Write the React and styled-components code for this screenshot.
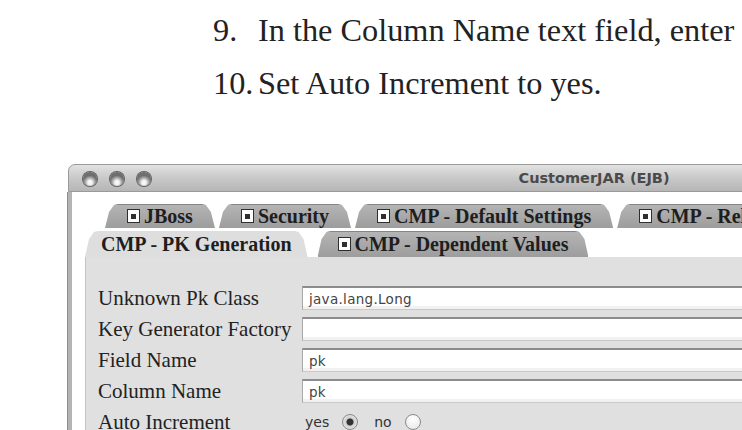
import React from "react";
import styled, { createGlobalStyle } from "styled-components";

const GlobalStyle = createGlobalStyle`
	html, body {
		margin: 0;
		padding: 0;
		background: #fff;
		overflow: hidden;
	}
`;

const Page = styled("div")`
	width: 742px;
	height: 430px;
	overflow: hidden;
	background: #fff;
	display: flex;
	flex-direction: column;
	align-items: flex-start;
`;

const Steps = styled("ol")`
	list-style: none;
	margin: 0;
	padding: 4px 0 0 213px;
	font-family: "Liberation Serif", serif;
	font-size: 32.3px;
	color: #222;
`;

const Step = styled("li")`
	display: flex;
	align-items: center;
	height: 53px;
	white-space: nowrap;
`;

const StepNum = styled("span")`
	width: 45px;
	flex: none;
`;

const Window = styled("div")`
	flex: none;
	width: 1052px;
	margin: 54px 0 0 68px;
	display: flex;
	flex-direction: column;
`;

const TitleBar = styled("div")`
	height: 26px;
	display: grid;
	grid-template-columns: 1fr auto 1fr;
	align-items: center;
	padding: 0 14px;
	border: 1px solid #9a9a9a;
	border-radius: 7px 7px 0 0;
	background: linear-gradient(#e2e2e2, #c6c6c6 55%, #b6b6b6);
`;

const Lights = styled("div")`
	display: flex;
	gap: 13px;
	margin-top: 2px;
`;

const Light = styled("span")`
	width: 14px;
	height: 14px;
	border-radius: 50%;
	background: radial-gradient(
		circle at 50% 75%,
		#f6f6f6 0 2px,
		#bcbcbc 4px,
		#6e6e6e 7px
	);
	box-shadow: 0 0 0 1px #606060;
`;

const Title = styled("span")`
	font-family: "DejaVu Sans", sans-serif;
	font-size: 14.5px;
	font-weight: bold;
	color: #4a4a4a;
`;

const Body = styled("div")`
	background: #fff;
	border-left: 4px solid #b4b4b4;
	box-shadow: -1px 0 0 #8d8d8d;
	padding-top: 12px;
	display: flex;
	flex-direction: column;
`;

const TabRow = styled("div")`
	display: flex;
	gap: ${(props) => props.$gap}px;
	padding-left: ${(props) => props.$indent}px;
	margin-bottom: ${(props) => props.$below}px;
`;

const Tab = styled("div")`
	height: ${(props) => props.$h}px;
	display: flex;
	align-items: center;
	gap: 4px;
	padding: 0 ${(props) => (props.$active ? 16 : props.$pad)}px;
	background: ${(props) =>
		props.$active
			? "#dedede"
			: "linear-gradient(#858585 0 1px, #b4b4b4 1px, #9d9d9d)"};
	clip-path: polygon(
		4px 8px,
		9px 1px,
		13px 0,
		calc(100% - 13px) 0,
		calc(100% - 9px) 1px,
		calc(100% - 4px) 8px,
		100% 100%,
		0 100%
	);
	font-family: "Liberation Serif", serif;
	font-size: 20px;
	font-weight: bold;
	color: #1e1e1e;
	white-space: nowrap;
`;

const TabIcon = styled("span")`
	width: 11px;
	height: 12px;
	flex: none;
	border: 1px solid #2e2e2e;
	background: #fff;
	display: flex;
	align-items: center;
	justify-content: center;

	&::after {
		content: "";
		width: 5px;
		height: 5px;
		background: #2e2e2e;
	}
`;

const Panel = styled("div")`
	margin-left: 13px;
	height: 200px;
	background: #e0e0e0;
	border-left: 1px solid #c4c4c4;
	padding: 29px 0 0 12px;
`;

const Form = styled("div")`
	display: grid;
	grid-template-columns: 204px 1fr;
	grid-auto-rows: 24px;
	row-gap: 7px;
	align-items: center;
`;

const Label = styled("span")`
	font-family: "Liberation Serif", serif;
	font-size: 21px;
	color: #222;
	white-space: nowrap;
`;

const Field = styled("div")`
	height: 24px;
	box-sizing: border-box;
	background: #fff;
	border-top: 2px solid #8c8c8c;
	border-left: 1px solid #a8a8a8;
	border-bottom: 1px solid #c9c9c9;
	box-shadow: inset 0 -3px 0 #f1f1f1;
	padding-left: 6px;
	display: flex;
	align-items: center;
	font-family: "DejaVu Sans", sans-serif;
	font-size: 13.5px;
	letter-spacing: 0.3px;
	color: #444;
`;

const Choices = styled("div")`
	display: flex;
	align-items: center;
	gap: 16px;
	padding-left: 3px;
	font-family: "DejaVu Sans", sans-serif;
	font-size: 14px;
	color: #333;
`;

const Choice = styled("label")`
	display: flex;
	align-items: center;
	gap: 13px;
`;

const Radio = styled("span")`
	width: 14px;
	height: 14px;
	border-radius: 50%;
	border: 1px solid #8a8a8a;
	background: ${(props) =>
		props.$checked
			? "radial-gradient(circle, #333 0 3px, #cfcfcf 4px, #f4f4f4)"
			: "radial-gradient(circle at 50% 30%, #fff, #e6e6e6)"};
`;

const tabsTop = [
	{ name: "JBoss" },
	{ name: "Security" },
	{ name: "CMP - Default Settings" },
	{ name: "CMP - Relationships" },
];

const fields = [
	{ label: "Unknown Pk Class", value: "java.lang.Long" },
	{ label: "Key Generator Factory", value: "" },
	{ label: "Field Name", value: "pk" },
	{ label: "Column Name", value: "pk" },
];

function App() {
	return (
		<Page>
			<GlobalStyle />
			<Steps>
				<Step>
					<StepNum>9.</StepNum>
					In the Column Name text field, enter
				</Step>
				<Step>
					<StepNum>10.</StepNum>
					Set Auto Increment to yes.
				</Step>
			</Steps>

			<Window>
				<TitleBar>
					<Lights>
						<Light />
						<Light />
						<Light />
					</Lights>
					<Title>CustomerJAR (EJB)</Title>
					<span />
				</TitleBar>
				<Body>
					<TabRow $indent={33} $gap={4} $below={3}>
						{tabsTop.map((t) => (
							<Tab key={t.name} $h={24} $pad={22}>
								<TabIcon />
								{t.name}
							</Tab>
						))}
					</TabRow>
					<TabRow $indent={13} $gap={10} $below={0}>
						<Tab $h={26} $active>
							CMP - PK Generation
						</Tab>
						<Tab $h={26} $pad={20}>
							<TabIcon />
							CMP - Dependent Values
						</Tab>
					</TabRow>
					<Panel>
						<Form>
							{fields.map((f) => (
								<React.Fragment key={f.label}>
									<Label>{f.label}</Label>
									<Field>{f.value}</Field>
								</React.Fragment>
							))}
							<Label>Auto Increment</Label>
							<Choices>
								<Choice>
									yes <Radio $checked />
								</Choice>
								<Choice>
									no <Radio />
								</Choice>
							</Choices>
						</Form>
					</Panel>
				</Body>
			</Window>
		</Page>
	);
}

export default App;
